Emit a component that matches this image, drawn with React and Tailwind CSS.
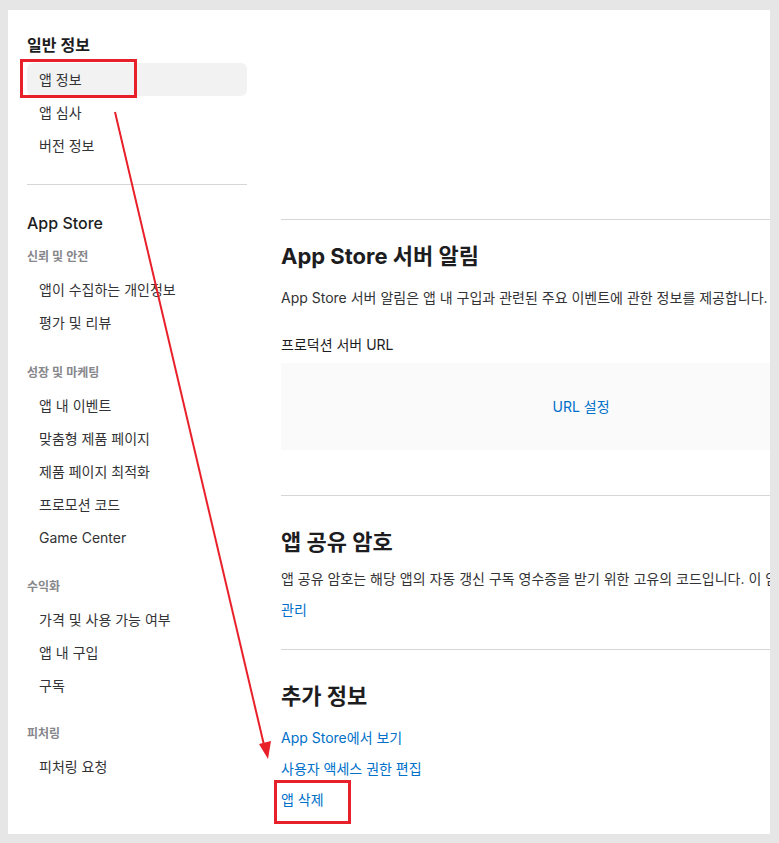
import React from "react";

const font = { fontFamily: 'Inter, "Noto Sans CJK KR", sans-serif' };

function Item({ children, active }) {
  return (
    <div
      className={
        "h-[33px] flex items-center pl-3 text-[14px] text-[#333336] rounded-md " +
        (active ? "bg-[#f2f2f2]" : "")
      }
    >
      {children}
    </div>
  );
}

function Category({ children, mt }) {
  return (
    <div className={"h-[18px] flex items-center text-[12px] font-semibold text-[#86868b] mb-[7px] " + mt}>
      {children}
    </div>
  );
}

function Link({ children }) {
  return <div className="h-5 flex items-center text-[14px] text-[#0070c9]">{children}</div>;
}

export default function App() {
  return (
    <div className="relative w-[779px] h-[843px] bg-[#e6e6e6] pt-[10px] pl-[8px] pr-[9px] pb-[9px]" style={font}>
      <div className="flex w-full h-full bg-white overflow-hidden pl-[19px]">
        {/* Sidebar */}
        <aside className="w-[220px] shrink-0 pt-[23px]">
          <div className="h-6 flex items-center text-[16px] font-semibold text-[#1d1d1f] mb-[6px]">일반 정보</div>
          <Item active>앱 정보</Item>
          <Item>앱 심사</Item>
          <Item>버전 정보</Item>
          <div className="h-px bg-[#d6d6d6] mt-[22px]" />
          <div className="h-6 flex items-center text-[16px] font-medium text-[#1d1d1f] mt-[26px]">App Store</div>
          <Category mt="mt-[13px]">신뢰 및 안전</Category>
          <Item>앱이 수집하는 개인정보</Item>
          <Item>평가 및 리뷰</Item>
          <Category mt="mt-[25px]">성장 및 마케팅</Category>
          <Item>앱 내 이벤트</Item>
          <Item>맞춤형 제품 페이지</Item>
          <Item>제품 페이지 최적화</Item>
          <Item>프로모션 코드</Item>
          <Item>Game Center</Item>
          <Category mt="mt-[24px]">수익화</Category>
          <Item>가격 및 사용 가능 여부</Item>
          <Item>앱 내 구입</Item>
          <Item>구독</Item>
          <Category mt="mt-[23px]">피처링</Category>
          <Item>피처링 요청</Item>
        </aside>

        {/* Main */}
        <main className="w-[600px] shrink-0 ml-[34px] pt-[209px]">
          <div className="h-px bg-[#d6d6d6]" />
          <h2 className="h-7 flex items-center text-[22px] font-bold text-[#1d1d1f] mt-[22px]">App Store 서버 알림</h2>
          <p className="h-5 flex items-center text-[14px] text-[#333336] whitespace-nowrap mt-[17px]">
            App Store 서버 알림은 앱 내 구입과 관련된 주요 이벤트에 관한 정보를 제공합니다. 자세히 알아보기
          </p>
          <div className="h-5 flex items-center text-[14px] text-[#1d1d1f] mt-[27px]">프로덕션 서버 URL</div>
          <div className="h-[87px] mt-[9px] bg-[#fafafa] flex items-center justify-center text-[14px] text-[#0070c9]">
            URL 설정
          </div>
          <div className="h-px bg-[#d6d6d6] mt-[45px]" />
          <h2 className="h-7 flex items-center text-[22px] font-bold text-[#1d1d1f] mt-[32px]">앱 공유 암호</h2>
          <p className="h-5 flex items-center text-[14px] text-[#333336] whitespace-nowrap mt-[12px]">
            앱 공유 암호는 해당 앱의 자동 갱신 구독 영수증을 받기 위한 고유의 코드입니다. 이 암호를 사용하여
          </p>
          <div className="mt-[11px]">
            <Link>관리</Link>
          </div>
          <div className="h-px bg-[#d6d6d6] mt-[30px]" />
          <h2 className="h-7 flex items-center text-[22px] font-bold text-[#1d1d1f] mt-[32px]">추가 정보</h2>
          <div className="mt-[17px] flex flex-col gap-[11px]">
            <Link>App Store에서 보기</Link>
            <Link>사용자 액세스 권한 편집</Link>
            <Link>앱 삭제</Link>
          </div>
        </main>
      </div>

      {/* Annotation overlay */}
      <svg className="absolute inset-0 pointer-events-none" width="779" height="843" viewBox="0 0 779 843">
        <rect x="21.5" y="60.5" width="114" height="36" fill="none" stroke="#e8202a" strokeWidth="3" />
        <rect x="275.5" y="781.5" width="74" height="41" fill="none" stroke="#e8202a" strokeWidth="3" />
        <line x1="115" y1="112" x2="264" y2="745" stroke="#e8202a" strokeWidth="2" />
        <polygon points="268,759 259,744 271,741" fill="#e8202a" />
      </svg>
    </div>
  );
}
